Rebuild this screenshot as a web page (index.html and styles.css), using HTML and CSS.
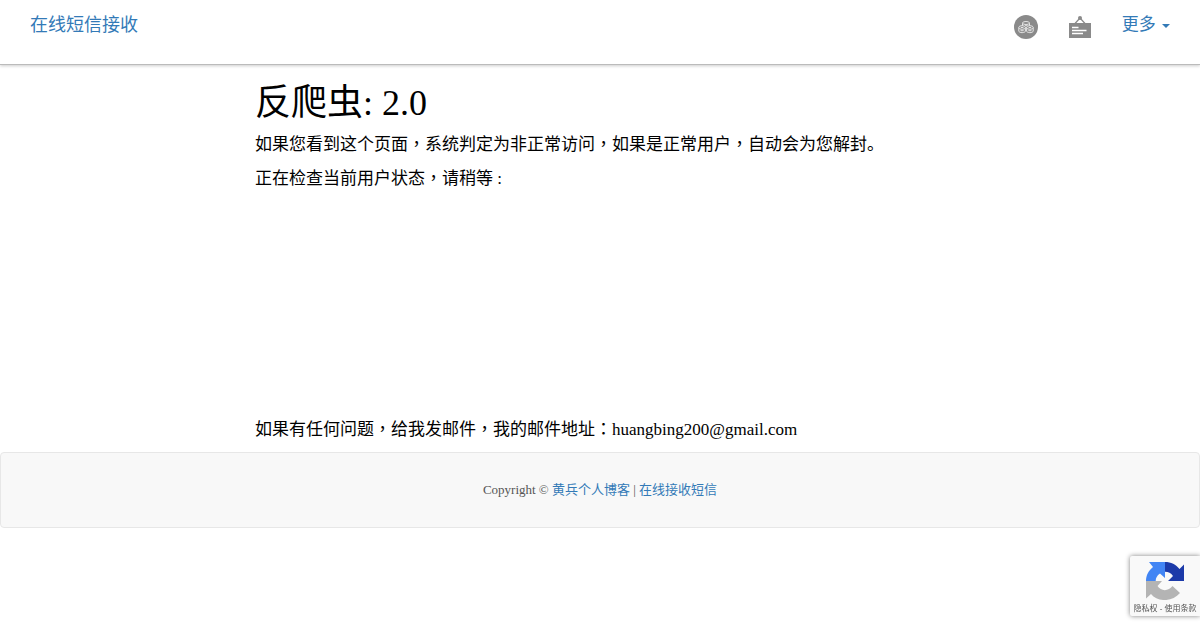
FILE: index.html
```html
<!DOCTYPE html>
<html lang="zh-CN">
<head>
    <meta charset="UTF-8">
    <meta name="viewport" content="width=device-width, initial-scale=1.0">
    <title>在线短信接收</title>
    <link rel="stylesheet" href="styles.css">
</head>
<body>

<header class="navbar">
    <a class="brand" href="#">在线短信接收</a>
    <nav class="nav-links">
        <a class="nav-icon" href="#" aria-label="coins">
            <svg width="24" height="24" viewBox="0 0 24 24">
                <circle cx="12" cy="12" r="12" fill="#8a8a8a"/>
                <g fill="#8a8a8a" stroke="#e4e4e4" stroke-width="1">
                    <path d="M8.500 8v4.500h7V8"/>
                    <ellipse cx="12" cy="8" rx="3.500" ry="1.500"/>
                    <path d="M4.800 12.500v3.500c0 2.200 6.600 2.200 6.600 0v-3.500"/>
                    <ellipse cx="8.100" cy="12.500" rx="3.300" ry="1.800"/>
                    <path d="M12.600 12.500v3.500c0 2.200 6.600 2.200 6.600 0v-3.500"/>
                    <ellipse cx="15.900" cy="12.500" rx="3.300" ry="1.800"/>
                </g>
                <path d="M6.500 15.700h3.200M14.300 15.700h3.200M6.800 12.500h2.600M14.600 12.500h2.600M11 10.300h2.500" stroke="#e4e4e4" stroke-width="1"/>
            </svg>
        </a>
        <a class="nav-icon" href="#" aria-label="notice">
            <svg width="24" height="24" viewBox="0 0 24 24">
                <path d="M7 8.500l5-5.500 5 5.500" fill="none" stroke="#8a8a8a" stroke-width="1.200"/>
                <circle cx="12" cy="3" r="2" fill="#8a8a8a"/>
                <path d="M1 8h22v15H1z" fill="#8a8a8a"/>
                <path d="M4 12.500h6.500M4 15.500h14.500M4 18.500h11" stroke="#fff" stroke-width="1.300"/>
            </svg>
        </a>
        <a class="more" href="#">更多 <span class="caret"></span></a>
    </nav>
</header>

<main class="container">
    <h1>反爬虫: 2.0</h1>
    <p>如果您看到这个页面<span class="mark" lang="zh-TW">，</span>系统判定为非正常访问<span class="mark" lang="zh-TW">，</span>如果是正常用户<span class="mark" lang="zh-TW">，</span>自动会为您解封。</p>
    <p>正在检查当前用户状态<span class="mark" lang="zh-TW">，</span>请稍等 :</p>
    <div class="check-area"></div>
    <p>如果有任何问题<span class="mark" lang="zh-TW">，</span>给我发邮件<span class="mark" lang="zh-TW">，</span>我的邮件地址<span class="mark" lang="zh-TW">：</span>huangbing200@gmail.com</p>
</main>

<footer class="footer">
    Copyright © <a href="#">黄兵个人博客</a> | <a href="#">在线接收短信</a>
</footer>

<div class="recaptcha">
    <svg width="38" height="38" viewBox="0 0 38 38">
        <path d="M19 0c6 0 11 2.500 14.500 7L38 2.500V19H22l5-5c-2-3-4.500-4.300-8-4.300z" fill="#1c3aa9"/>
        <path d="M19 0v16l-5-4.500c-3 2-4.300 4.500-4.300 7.500H0c0-5.500 2.500-10.500 7-14L3 0z" fill="#4285f4"/>
        <path d="M0 19h16l-4.500 5c3.500 5.500 11 5.500 15 0L34 31C26 40.500 11.500 40 5 32l-5 4.500z" fill="#b4b4b4"/>
    </svg>
    <div class="recaptcha-links"><a href="#">隐私权</a> - <a href="#">使用条款</a></div>
</div>

</body>
</html>
```
FILE: styles.css
```css
* {
    box-sizing: border-box;
}

body {
    margin: 0;
    font-family: "Liberation Serif", "Noto Sans CJK SC", serif;
    font-size: 17px;
    line-height: 24px;
    color: #000;
    background-color: #fff;
}

a {
    color: #337ab7;
    text-decoration: none;
}

.navbar {
    display: flex;
    justify-content: space-between;
    align-items: flex-start;
    height: 65px;
    padding: 13px 30px;
    border-bottom: 1px solid #bbb;
    box-shadow: 0 1px 3px rgba(0, 0, 0, 0.2);
}

.brand {
    font-size: 18px;
}

.nav-links {
    display: flex;
    gap: 30px;
}

.nav-icon {
    padding-top: 2px;
}

.nav-icon svg {
    display: block;
}

.caret {
    display: inline-block;
    margin-left: 2px;
    vertical-align: middle;
    border-top: 4px solid;
    border-left: 4px solid transparent;
    border-right: 4px solid transparent;
}

.container {
    max-width: 720px;
    margin: 0 auto;
    padding: 0 15px;
}

h1 {
    margin: 18px 0 10px;
    font-size: 36px;
    font-weight: normal;
    line-height: 40px;
}

p {
    margin: 0 0 10px;
}

/* centered punctuation */
.mark {
    font-family: "Noto Sans CJK TC", sans-serif;
    line-height: 1;
}

.check-area {
    height: 217px;
}

.footer {
    padding: 25px 15px;
    border: 1px solid #e7e7e7;
    border-radius: 4px;
    background-color: #f8f8f8;
    color: #555;
    font-size: 13px;
    text-align: center;
}

.recaptcha {
    position: fixed;
    right: 0;
    bottom: 14px;
    width: 70px;
    height: 60px;
    padding-top: 6px;
    border-radius: 2px 0 0 2px;
    background-color: #f9f9f9;
    box-shadow: 0 0 5px gray;
    text-align: center;
}

.recaptcha svg {
    display: block;
    margin: 0 auto;
}

.recaptcha-links {
    font-family: "Liberation Sans", "Noto Sans CJK SC", sans-serif;
    font-size: 8px;
    line-height: 18px;
    white-space: nowrap;
    color: #555;
}

.recaptcha-links a {
    color: #555;
}
```
